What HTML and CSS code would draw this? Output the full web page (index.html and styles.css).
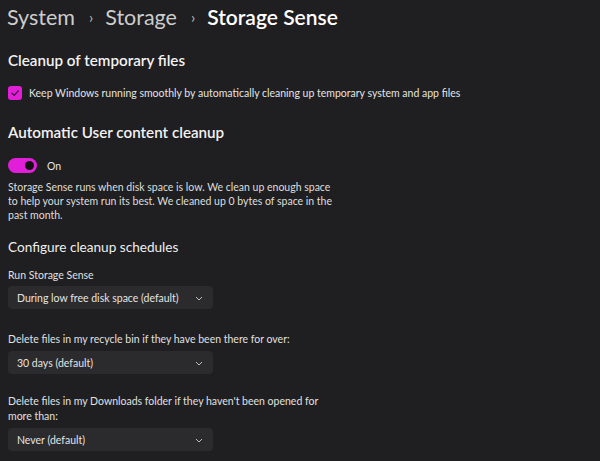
FILE: index.html
```html
<!DOCTYPE html>
<html>
<head>
<meta charset="utf-8">
<link rel="stylesheet" href="styles.css">
</head>
<body>
<div class="page">
  <div class="crumbs">
    <span class="crumb dim">System</span>
    <span class="sep">›</span>
    <span class="crumb dim">Storage</span>
    <span class="sep">›</span>
    <span class="crumb cur">Storage Sense</span>
  </div>

  <h2 class="h">Cleanup of temporary files</h2>
  <div class="check-row">
    <span class="checkbox">
      <svg width="10" height="10" viewBox="0 0 10 10"><path d="M2 5.2 L4.2 7.3 L8.2 2.8" fill="none" stroke="#3a0a38" stroke-width="1.2" stroke-linecap="round" stroke-linejoin="round"/></svg>
    </span>
    <span class="txt">Keep Windows running smoothly by automatically cleaning up temporary system and app files</span>
  </div>

  <h2 class="h h2">Automatic User content cleanup</h2>
  <div class="toggle-row">
    <span class="toggle"><span class="knob"></span></span>
    <span class="txt">On</span>
  </div>
  <p class="para">Storage Sense runs when disk space is low. We clean up enough space to help your system run its best. We cleaned up 0 bytes of space in the past month.</p>

  <h3 class="h3">Configure cleanup schedules</h3>
  <div class="label first">Run Storage Sense</div>
  <div class="select s1"><span>During low free disk space (default)</span><svg class="chev" width="8" height="5" viewBox="0 0 8 5"><path d="M1 1 L4 4 L7 1" fill="none" stroke="#bdbdbd" stroke-width="1"/></svg></div>

  <div class="label gap">Delete files in my recycle bin if they have been there for over:</div>
  <div class="select s2"><span>30 days (default)</span><svg class="chev" width="8" height="5" viewBox="0 0 8 5"><path d="M1 1 L4 4 L7 1" fill="none" stroke="#bdbdbd" stroke-width="1"/></svg></div>

  <div class="label wrap">Delete files in my Downloads folder if they haven't been opened for more than:</div>
  <div class="select s3"><span>Never (default)</span><svg class="chev" width="8" height="5" viewBox="0 0 8 5"><path d="M1 1 L4 4 L7 1" fill="none" stroke="#bdbdbd" stroke-width="1"/></svg></div>
</div>
</body>
</html>
```
FILE: styles.css
```css
html, body {
  margin: 0;
  padding: 0;
  background: #1f1e20;
  height: 100%;
  overflow: hidden;
}
.page {
  padding: 4px 8px 0 8px;
  font-family: "Lato", "Open Sans", sans-serif;
  color: #e6e6e6;
}
.crumbs {
  display: flex;
  align-items: baseline;
  font-size: 21.5px;
  height: 30px;
  margin-left: -1px;
}
.crumb.dim { color: #cdcdcd; }
.crumb.cur { color: #ffffff; font-weight: 600; font-size: 21px; }
.sep {
  color: #bcbcbc;
  font-size: 15px;
  margin: 0 12px 0 14px;
  position: relative;
  top: -2px;
}
.h {
  margin: 16px 0 0 0;
  font-size: 15.2px;
  font-weight: 600;
  color: #f2f2f2;
  line-height: 20px;
}
.h2 { margin-top: 22px; }
.check-row {
  display: flex;
  align-items: center;
  margin-top: 16px;
  height: 14px;
}
.checkbox {
  width: 14px;
  height: 14px;
  border-radius: 3px;
  background: #e11fd9;
  display: flex;
  align-items: center;
  justify-content: center;
  margin-right: 7px;
}
.txt {
  font-size: 10.5px;
  color: #e4e4e4;
}
.toggle-row {
  display: flex;
  align-items: center;
  margin-top: 16px;
  height: 15px;
}
.toggle {
  width: 29px;
  height: 15px;
  border-radius: 8px;
  background: #e11fd9;
  display: flex;
  align-items: center;
  justify-content: flex-end;
  box-sizing: border-box;
  padding-right: 3px;
  margin-right: 10px;
}
.knob {
  width: 9px;
  height: 9px;
  border-radius: 50%;
  background: #111;
}
.para {
  margin: 7px 0 0 0;
  width: 330px;
  font-size: 10.5px;
  line-height: 14px;
  color: #dedede;
}
.h3 {
  margin: 15px 0 0 0;
  font-size: 13.6px;
  font-weight: 400;
  color: #eeeeee;
  line-height: 20px;
}
.label {
  font-size: 10.5px;
  line-height: 14px;
  color: #e0e0e0;
}
.label.first { margin-top: 11px; }
.label.gap { margin-top: 23px; }
.label.wrap { width: 330px; margin-top: 20px; line-height: 15px; }
.select {
  width: 205px;
  height: 23px;
  box-sizing: border-box;
  background: #2b2a2c;
  border-radius: 4px;
  display: flex;
  align-items: center;
  justify-content: space-between;
  padding: 0 10px 0 9px;
  font-size: 10.5px;
  color: #e4e4e4;
}
.s1 { margin-top: 4px; }
.s2 { margin-top: 5px; }
.s3 { margin-top: 4px; }
.chev { margin-top: 1px; }
```
